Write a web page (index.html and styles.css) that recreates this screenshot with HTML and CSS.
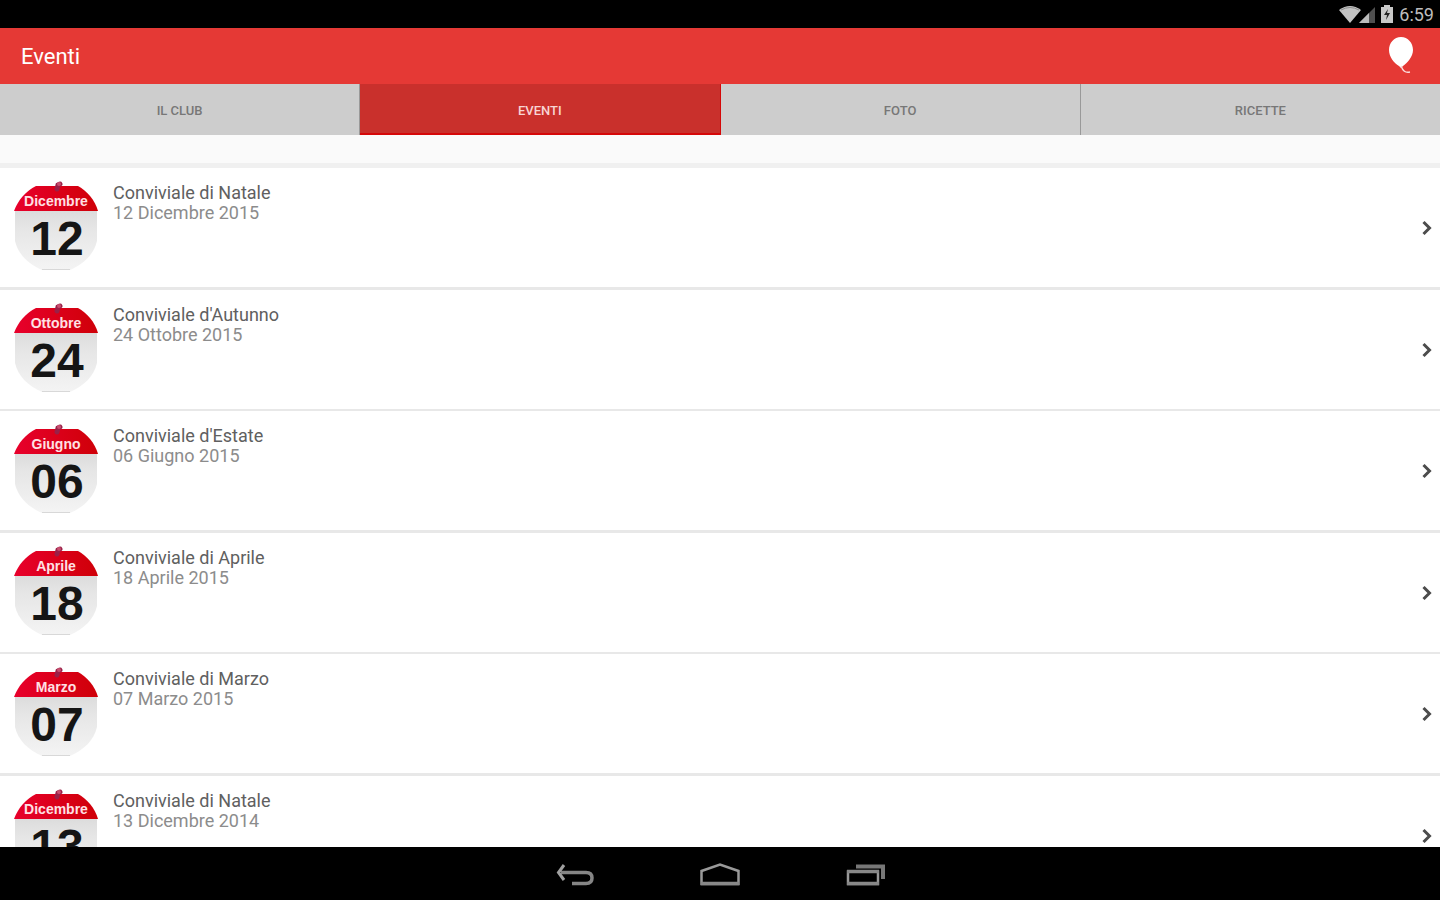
FILE: index.html
```
<!DOCTYPE html>
<html lang="it">
<head>
    <meta charset="UTF-8">
    <meta name="viewport" content="width=device-width, initial-scale=1.0">
    <title>Eventi</title>
    <link rel="stylesheet" href="styles.css">
</head>
<body>
    <svg class="defs" width="0" height="0" aria-hidden="true">
        <defs>
            <linearGradient id="paper" x1="0" y1="0" x2="0" y2="1">
                <stop offset="0" stop-color="#dcdcdc"/>
                <stop offset="0.3" stop-color="#e6e6e6"/>
                <stop offset="1" stop-color="#f4f4f4"/>
            </linearGradient>
            <linearGradient id="red" x1="0" y1="0" x2="1" y2="0">
                <stop offset="0" stop-color="#e8002c"/>
                <stop offset="1" stop-color="#cf0008"/>
            </linearGradient>
            <symbol id="calendar" viewBox="0 0 84 90">
                <path d="M1 30H83V60C80 73 70 83 56 89H28C14 83 4 73 1 60Z" fill="url(#paper)"/>
                <path d="M22 5H64C73 10 81 19 84 30H0C4 19 12 10 22 5Z" fill="url(#red)"/>
                <path d="M28 88.500H56" stroke="#d8d8d8" stroke-width="1"/>
                <path d="M43 8L44 4L46 3" fill="none" stroke="#9a2048" stroke-width="5" stroke-linecap="round"/>
                <circle cx="45" cy="3" r="2" fill="#c85070"/>
            </symbol>
            <symbol id="chevron" viewBox="0 0 10 16">
                <path d="M1.500 2L7.500 8L1.500 14" fill="none" stroke="#4c4c4c" stroke-width="3"/>
            </symbol>
        </defs>
    </svg>

    <div class="status-bar">
        <svg class="signal" width="38" height="20" viewBox="0 0 38 20" aria-hidden="true">
            <path d="M0 6Q11 -2 22 6L11 19Z" fill="#c4c4c4"/>
            <path d="M2 6Q11 1 20 6" fill="none" stroke="#8c8c8c" stroke-width="1"/>
            <path d="M20 19L36 3V19Z" fill="#505050"/>
            <path d="M20 19L30 9V19Z" fill="#bbb"/>
        </svg>
        <svg class="battery" width="12" height="18" viewBox="0 0 12 18" aria-hidden="true">
            <path d="M0 2H3V0H9V2H12V18H0Z" fill="#c8c8c8"/>
            <path d="M7 4L3 10H6L5 15L9 8H6Z" fill="#222"/>
        </svg>
        <span class="clock">6:59</span>
    </div>

    <header>
        <h1>Eventi</h1>
        <button type="button" class="balloon-btn" aria-label="Club">
            <svg width="26" height="38" viewBox="0 0 26 38" aria-hidden="true">
                <path d="M13 0C20 0 25 6 25 13C25 20 19 26 15 29L13 31L11 29C6 26 1 20 1 13C1 6 6 0 13 0Z" fill="#fff"/>
                <path d="M13 29C15 34 17 36 22 35" fill="none" stroke="#fbdcdc" stroke-width="1.500"/>
            </svg>
        </button>
    </header>

    <nav class="tabs">
        <a href="#">IL CLUB</a>
        <a href="#" class="active">EVENTI</a>
        <a href="#">FOTO</a>
        <a href="#">RICETTE</a>
    </nav>

    <main>
        <div class="list-top"></div>
        <ul class="events" id="events"></ul>
    </main>

    <footer class="nav-bar">
        <button type="button" aria-label="Indietro">
            <svg width="40" height="26" viewBox="0 0 40 26" aria-hidden="true">
                <path d="M6 10.500H31Q37 10.500 37 16Q37 21.500 31 21.500H17" fill="none" stroke="#858585" stroke-width="3.500"/>
                <path d="M9 3L3.500 10.500L9 18" fill="none" stroke="#a0a0a0" stroke-width="3"/>
            </svg>
        </button>
        <button type="button" aria-label="Home">
            <svg width="40" height="26" viewBox="0 0 40 26" aria-hidden="true">
                <path d="M1.500 22V9L20 2.500L38.500 9V22Z" fill="none" stroke="#999" stroke-width="2.500"/>
                <path d="M1 21.500H39" stroke="#888" stroke-width="3.500"/>
            </svg>
        </button>
        <button type="button" aria-label="Recenti">
            <svg width="40" height="26" viewBox="0 0 40 26" aria-hidden="true">
                <path d="M3 9.500H33V22H3Z" fill="none" stroke="#999" stroke-width="2.500"/>
                <path d="M2 9.500H34M2 21.500H34" stroke="#888" stroke-width="3.500"/>
                <path d="M11 4.500H38V17" fill="none" stroke="#777" stroke-width="4"/>
            </svg>
        </button>
    </footer>

    <script src="script.js"></script>
</body>
</html>
```
FILE: styles.css
```
body {
    font-family: Roboto, sans-serif;
    margin: 0;
    background: #fff;
    color: #444;
    display: flex;
    flex-direction: column;
    height: 100vh;
    overflow: hidden;
}

.defs {
    position: absolute;
}

button {
    background: none;
    border: none;
    padding: 0;
    cursor: pointer;
}

svg {
    display: block;
}

.status-bar {
    flex: none;
    background: #000;
    height: 28px;
    display: flex;
    align-items: center;
    justify-content: flex-end;
    padding-right: 6px;
}

.signal {
    margin-right: 4px;
}

.battery {
    margin-right: 6px;
}

.clock {
    color: #bdbdbd;
    font-size: 18px;
}

header {
    flex: none;
    background: #e53935;
    color: #fff;
    height: 56px;
    padding: 0 26px 0 21px;
    display: flex;
    align-items: center;
    justify-content: space-between;
}

header h1 {
    font-size: 22px;
    line-height: 28px;
    font-weight: 400;
    margin: 0;
    padding-top: 2px;
}

.tabs {
    flex: none;
    display: flex;
    height: 51px;
}

.tabs a {
    flex: 1;
    display: flex;
    align-items: center;
    justify-content: center;
    background: #cdcdcd;
    color: #777;
    font-size: 13px;
    font-weight: 500;
    text-decoration: none;
    box-sizing: border-box;
    padding-top: 2px;
    border-right: 1px solid #999;
}

.tabs a:last-child {
    border-right: none;
}

.tabs a.active {
    background: #c9302c;
    color: #f8d4d4;
    border-right-color: #d50808;
    box-shadow: inset 0 -2px #d50808;
}

main {
    flex: 1;
    min-height: 0;
    overflow: hidden;
}

.list-top {
    height: 28px;
    background: #fafafa;
    border-bottom: 5px solid #f0f0f0;
}

.events {
    list-style: none;
    margin: 0;
    padding: 0;
}

.events li {
    border-bottom: 3px solid #e8e8e8;
}

.events li:nth-child(even) {
    border-bottom-width: 2px;
}

.event {
    display: flex;
    height: 119px;
    padding: 0 8px 0 14px;
    box-sizing: border-box;
    color: inherit;
    text-decoration: none;
}

.badge {
    width: 84px;
    height: 90px;
    margin: 13px 15px 0 0;
    overflow: visible;
}

.badge text {
    font-family: "Liberation Sans", Arial, sans-serif;
    font-weight: 700;
    text-anchor: middle;
}

.badge .month {
    font-size: 14px;
    fill: #ffe0e4;
}

.badge .day {
    font-size: 48px;
    fill: #151515;
}

.info {
    flex: 1;
    padding-top: 15px;
    font-size: 18px;
    line-height: 20px;
}

.info h2 {
    font-size: 18px;
    font-weight: 400;
    margin: 0;
    color: #606060;
}

.info p {
    margin: 0;
    color: #8c8c8c;
}

.chevron {
    width: 10px;
    height: 16px;
    align-self: center;
}

.nav-bar {
    flex: none;
    background: #000;
    height: 53px;
    padding-top: 2px;
    box-sizing: border-box;
    display: flex;
    align-items: center;
    justify-content: center;
    gap: 105px;
}
```
FILE: script.js
```
const events = [
    { title: "Conviviale di Natale", day: "12", month: "Dicembre", year: 2015 },
    { title: "Conviviale d'Autunno", day: "24", month: "Ottobre", year: 2015 },
    { title: "Conviviale d'Estate", day: "06", month: "Giugno", year: 2015 },
    { title: "Conviviale di Aprile", day: "18", month: "Aprile", year: 2015 },
    { title: "Conviviale di Marzo", day: "07", month: "Marzo", year: 2015 },
    { title: "Conviviale di Natale", day: "13", month: "Dicembre", year: 2014 }
];

document.getElementById("events").innerHTML = events.map(e => `
    <li>
        <a class="event" href="#">
            <svg class="badge" viewBox="0 0 84 90" aria-hidden="true">
                <use href="#calendar"/>
                <text class="month" x="42" y="25">${e.month}</text>
                <text class="day" x="43" y="74">${e.day}</text>
            </svg>
            <div class="info">
                <h2>${e.title}</h2>
                <p>${e.day} ${e.month} ${e.year}</p>
            </div>
            <svg class="chevron" aria-hidden="true"><use href="#chevron"/></svg>
        </a>
    </li>
`).join("");
```
